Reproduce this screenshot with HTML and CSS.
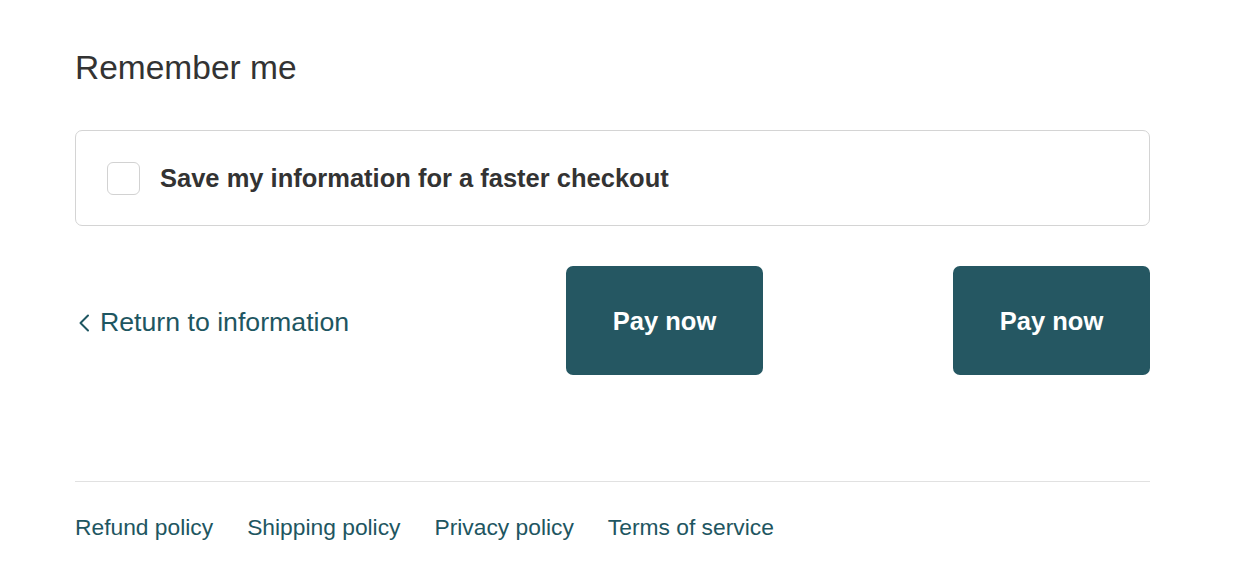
FILE: index.html
```html
<!DOCTYPE html>
<html>
<head>
<meta charset="utf-8">
<link rel="stylesheet" href="styles.css">
</head>
<body>
<main class="page">
  <h2 class="title">Remember me</h2>
  <label class="remember">
    <span class="checkbox"></span>
    <span class="remember-text">Save my information for a faster checkout</span>
  </label>
  <div class="actions">
    <a class="back" href="#">
      <svg class="chev" width="12" height="18" viewBox="0 0 12 18"><polyline points="10,1.5 2.5,9 10,16.5" fill="none" stroke="#1e5661" stroke-width="2" stroke-linecap="round" stroke-linejoin="round"/></svg>
      <span>Return to information</span>
    </a>
    <button class="pay">Pay now</button>
    <button class="pay">Pay now</button>
  </div>
  <hr class="rule">
  <nav class="footer">
    <a href="#">Refund policy</a>
    <a href="#">Shipping policy</a>
    <a href="#">Privacy policy</a>
    <a href="#">Terms of service</a>
  </nav>
</main>
</body>
</html>
```
FILE: styles.css
```css
html, body {
  margin: 0;
  padding: 0;
  background: #ffffff;
}
body {
  font-family: "Liberation Sans", Arial, Helvetica, sans-serif;
  color: #333333;
}
.page {
  width: 1075px;
  margin-left: 75px;
  padding-top: 48px;
}
.title {
  margin: 0;
  font-size: 33.5px;
  line-height: 40px;
  font-weight: 400;
  color: #333333;
}
.remember {
  box-sizing: border-box;
  margin-top: 42px;
  height: 96px;
  border: 1px solid #d4d4d4;
  border-radius: 7px;
  display: flex;
  align-items: center;
  padding-left: 31px;
  gap: 20px;
}
.checkbox {
  box-sizing: border-box;
  width: 33px;
  height: 33px;
  border: 1px solid #d2d2d2;
  border-radius: 6px;
  background: #fff;
  flex: none;
}
.remember-text {
  font-size: 25.5px;
  font-weight: 700;
  color: #333333;
}
.actions {
  margin-top: 40px;
  display: flex;
  align-items: center;
  gap: 190px;
}
.back {
  flex: 1;
  display: flex;
  align-items: center;
  gap: 10px;
  padding-left: 3px;
  color: #1e5661;
  text-decoration: none;
  font-size: 26.7px;
  padding-top: 4px;
}
.chev {
  flex: none;
}
.pay {
  width: 197px;
  height: 109px;
  border: none;
  border-radius: 7px;
  background: #255762;
  color: #ffffff;
  font-family: "Liberation Sans", Arial, Helvetica, sans-serif;
  font-size: 25.5px;
  font-weight: 700;
  padding: 2px 0 0 0;
}
.rule {
  margin: 106px 0 0 0;
  border: none;
  border-top: 1px solid #e1e1e1;
  height: 0;
}
.footer {
  margin-top: 31px;
  display: flex;
  gap: 34px;
}
.footer a {
  color: #1e5661;
  text-decoration: none;
  font-size: 22.8px;
  line-height: 28px;
}
```
